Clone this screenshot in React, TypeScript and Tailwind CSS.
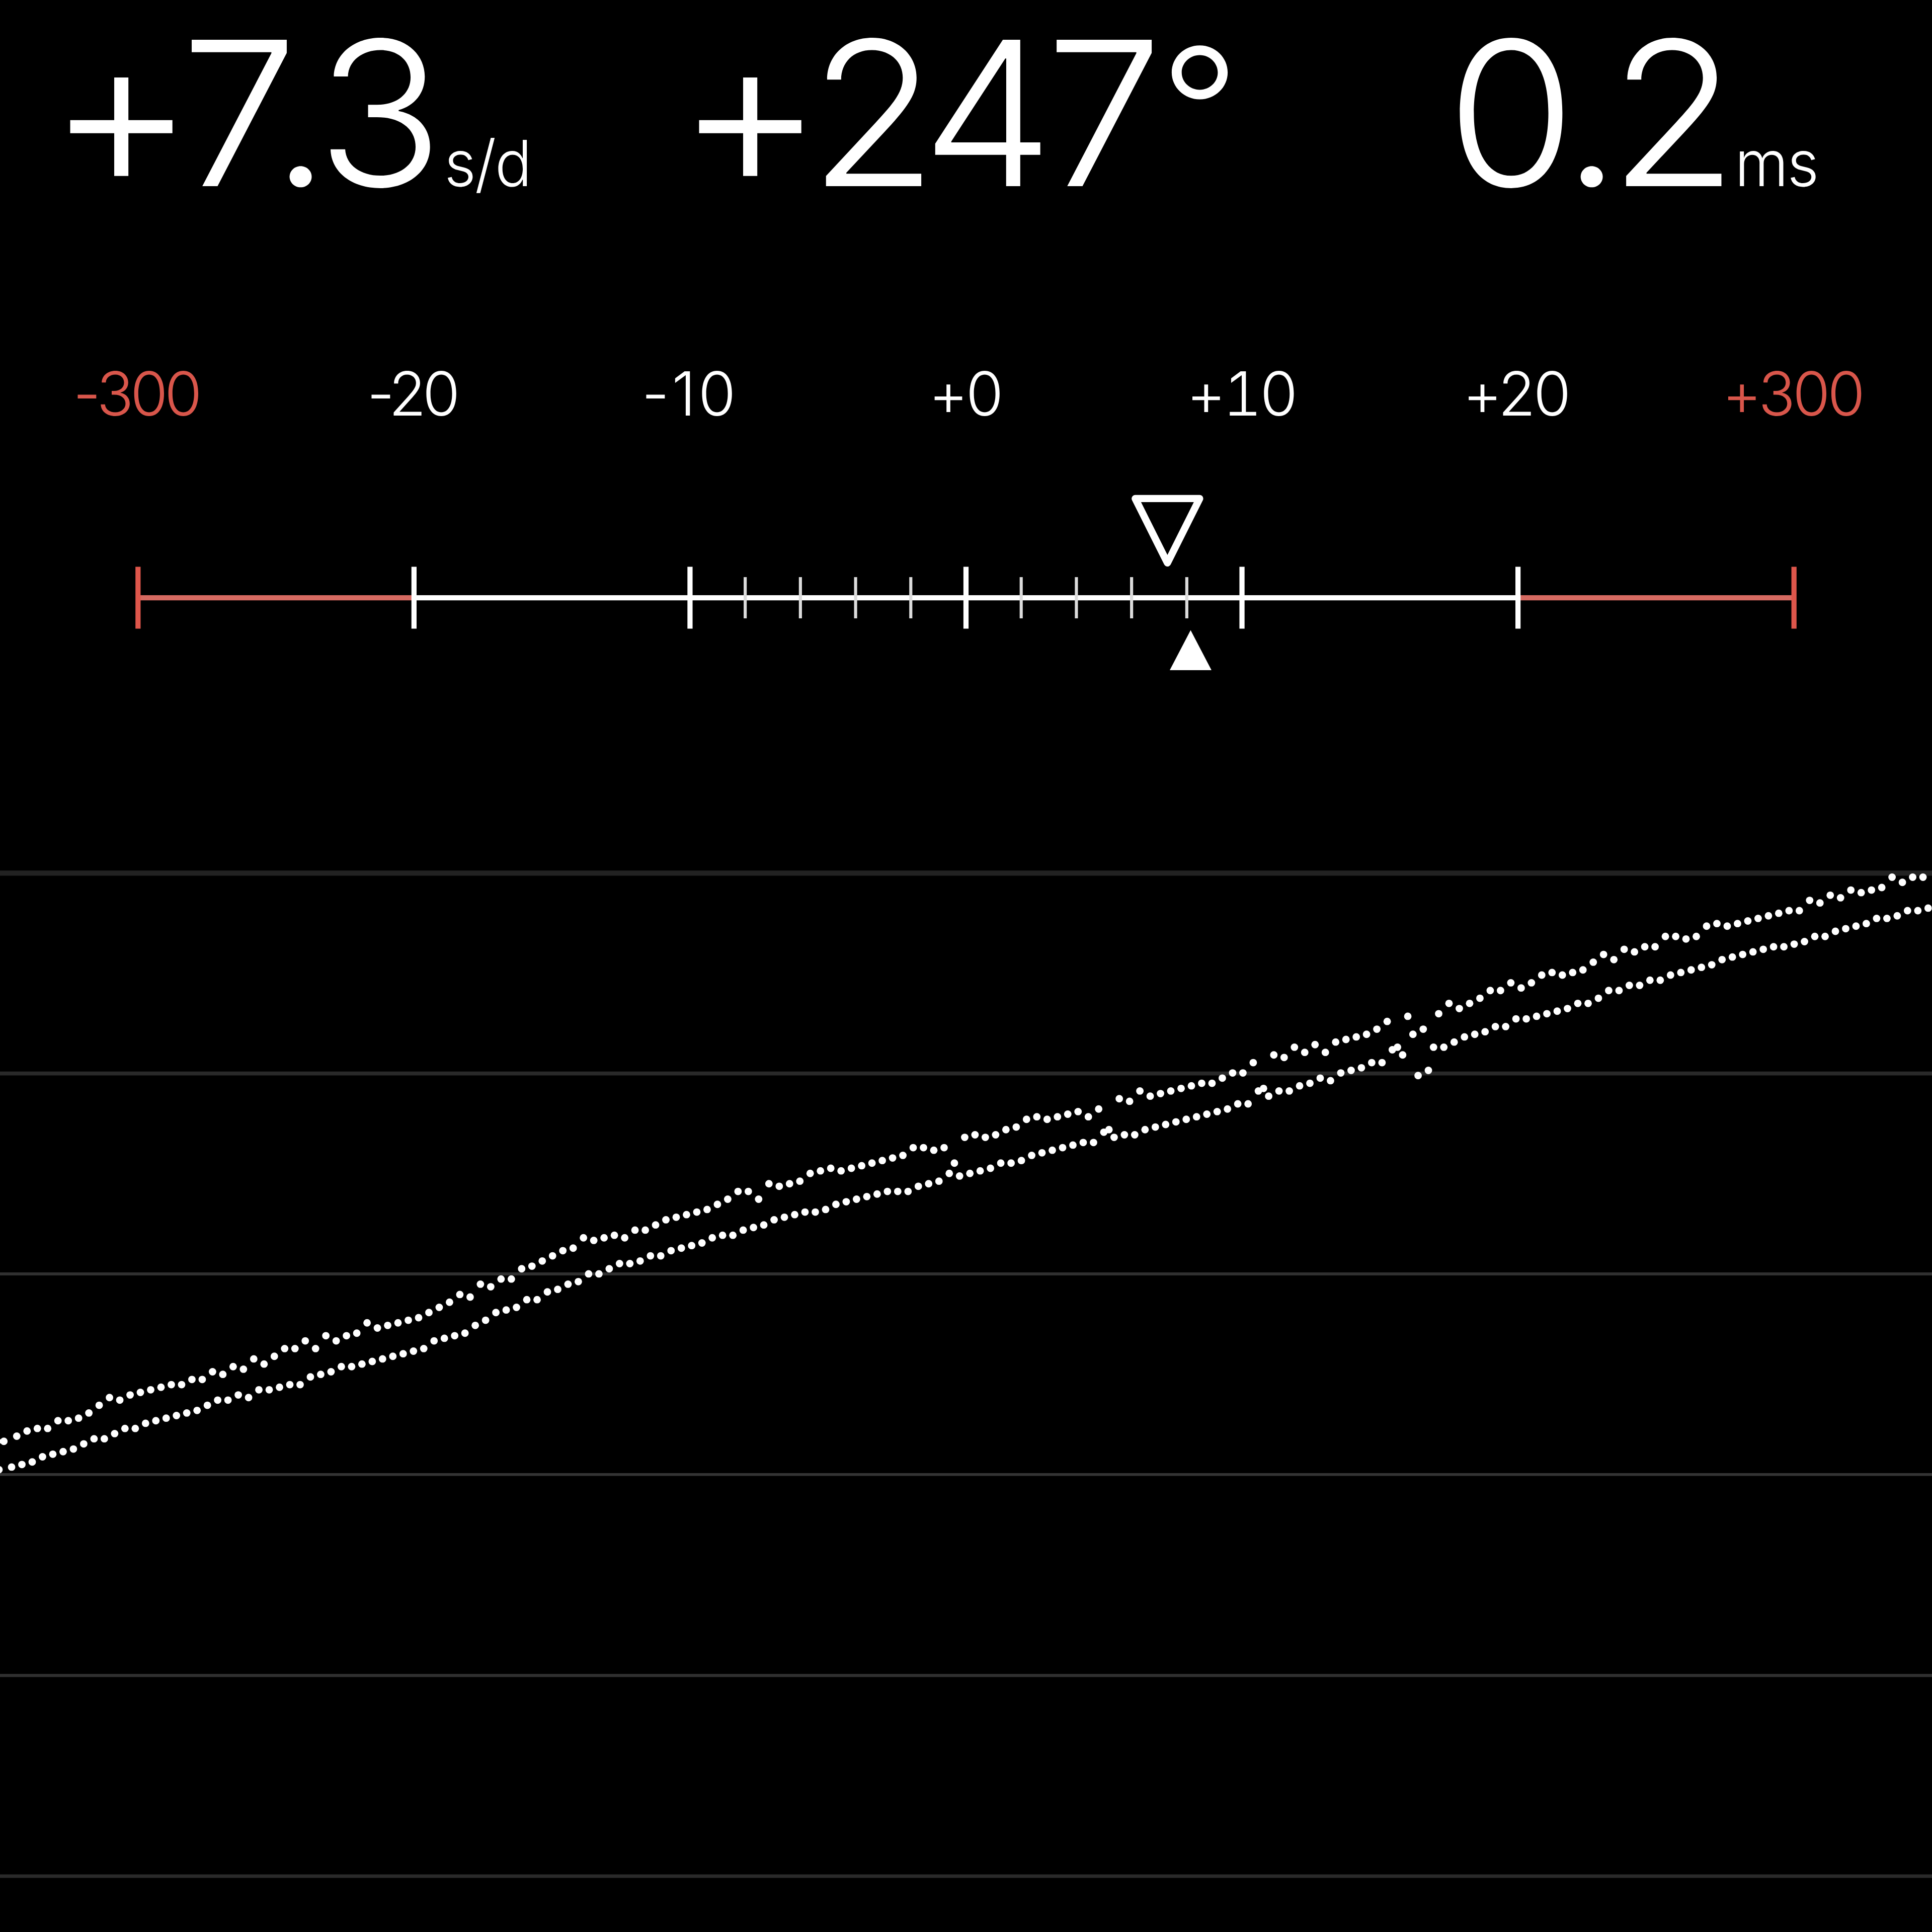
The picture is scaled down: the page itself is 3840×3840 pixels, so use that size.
const readouts = [
  {
    box: 'w-[1280px] pl-[94px]',
    glyphs: [
      { char: '+', style: 'text-[433px] tracking-[-28px] align-[-5px]' },
      { char: '7', style: 'tracking-[-51px]' },
      { char: '.', style: 'tracking-[-26px]' },
      { char: '3', style: '' },
    ],
    unit: 's/d',
    unitStyle: 'ml-[32px]',
  },
  {
    box: 'w-[1595px] pl-[64px]',
    glyphs: [
      { char: '+', style: 'text-[433px] tracking-[-29px] align-[-5px]' },
      { char: '2', style: 'tracking-[-30px]' },
      { char: '4', style: 'tracking-[-15px]' },
      { char: '7', style: 'tracking-[-6px]' },
      { char: '°', style: 'text-[337px] font-[350] align-[32px]' },
    ],
    unit: '',
    unitStyle: '',
  },
  {
    box: 'w-[960px]',
    glyphs: [
      { char: '0', style: 'tracking-[-26px]' },
      { char: '.', style: 'tracking-[-23px]' },
      { char: '2', style: '' },
    ],
    unit: 'ms',
    unitStyle: 'ml-[17px]',
  },
]

const labels = [
  { text: '-300', style: 'pr-[8px] tracking-[-0.055em] text-[#d9564b]' },
  { text: '-20', style: 'pr-[9px] tracking-[-0.06em]' },
  { text: '-10', style: 'tracking-[0.04em]' },
  { text: '+0', style: 'pr-[5px] tracking-[-0.04em]' },
  { text: '+10', style: 'pr-[4px] tracking-[-0.05em] tabular-nums' },
  { text: '+20', style: 'pr-[9px] tracking-[-0.035em]' },
  { text: '+300', style: 'pr-[7px] tracking-[-0.045em] text-[#d9564b]' },
]

// Tick positions on the 750 unit wide scale, one label column is 750 / 7
const column = 750 / 7
const majorTicks = [0, 1, 2, 3, 4, 5, 6].map((i) => column * (i + 0.5))
const minorTicks = [-4, -3, -2, -1, 1, 2, 3, 4].map((i) => 375 + (column / 5) * i)

const gridLines = [
  { y: 339, width: 2, color: '#222222' },
  { y: 416.8, width: 1.5, color: '#292929' },
  { y: 494.6, width: 1.2, color: '#303030' },
  { y: 572.5, width: 1.1, color: '#343434' },
  { y: 650.5, width: 1.2, color: '#303030' },
  { y: 728.4, width: 1.4, color: '#2a2a2a' },
]

// Beat traces, one sample every 4 units
const tick = [
  557, 555, 554, 554, 551, 551, 550, 548, 545, 542, 543, 541, 540, 539, 538, 537, 537, 535, 535, 532,
  533, 530, 531, 527, 529, 526, 523, 523, 520, 523, 518, 520, 518, 517, 513, 515, 514, 513, 512, 511,
  509, 507, 505, 502, 503, 498, 499, 496, 496, 492, 491, 489, 487, 485, 484, 480, 481, 480, 479, 480,
  477, 477, 475, 473, 472, 471, 470, 469, 467, 465, 462, 462, 465, 459, 460, 459, 458, 455, 454, 453,
  454, 453, 452, 451, 450, 449, 448, 445, 445, 446, 445, 451, 441, 440, 441, 440, 438, 437, 434, 433,
  434, 433, 432, 431, 433, 430, 438, 426, 427, 423, 425, 424, 423, 422, 421, 420, 420, 418, 416, 416,
  412, 422, 409, 410, 406, 408, 405, 408, 404, 403, 402, 401, 399, 396, 406, 394, 417, 415, 393, 389,
  391, 389, 387, 384, 384, 381, 383, 381, 378, 377, 378, 377, 376, 373, 370, 372, 368, 369, 367, 367,
  363, 363, 364, 363, 359, 358, 359, 358, 357, 356, 355, 354, 353, 353, 349, 350, 347, 348, 345, 346,
  345, 344, 340, 342, 340, 340,
]

const tock = [
  569, 568, 567, 565, 564, 563, 562, 560, 558, 558, 556, 554, 554, 552, 551, 550, 549, 548, 547, 545,
  543, 543, 541, 542, 539, 539, 538, 537, 537, 534, 533, 532, 530, 530, 529, 528, 527, 526, 525, 524,
  523, 520, 519, 518, 517, 514, 512, 509, 508, 507, 504, 504, 501, 500, 498, 497, 494, 494, 492, 490,
  490, 489, 487, 487, 485, 484, 483, 482, 480, 479, 479, 477, 476, 475, 473, 472, 471, 470, 470, 469,
  467, 466, 465, 464, 463, 462, 462, 462, 460, 459, 458, 455, 456, 455, 454, 453, 451, 451, 450, 448,
  447, 446, 445, 444, 443, 443, 439, 441, 440, 440, 438, 437, 436, 435, 434, 433, 432, 431, 430, 428,
  428, 423, 425, 423, 423, 421, 420, 418, 419, 416, 415, 414, 412, 412, 407, 409, 401, 399, 406, 406,
  404, 402, 401, 400, 398, 398, 395, 395, 394, 393, 392, 391, 389, 389, 387, 384, 384, 382, 382, 380,
  380, 378, 377, 376, 375, 374, 372, 371, 370, 369, 368, 367, 367, 366, 365, 363, 363, 361, 360, 359,
  358, 356, 356, 355, 353, 353, 352,
]

function Readouts() {
  return (
    <header className="flex h-[640px] items-start font-light text-white">
      {readouts.map((item, index) => (
        <div key={index} className={`flex items-baseline whitespace-nowrap ${item.box}`}>
          <div className="h-[448px] origin-left scale-x-104 text-[400px] leading-[449px]">
            {item.glyphs.map((glyph) => (
              <span key={glyph.char} className={`leading-[0.9] ${glyph.style}`}>
                {glyph.char}
              </span>
            ))}
          </div>
          {item.unit && (
            <span className={`origin-left scale-x-97 text-[126px] tracking-[-0.02em] ${item.unitStyle}`}>{item.unit}</span>
          )}
        </div>
      ))}
    </header>
  )
}

function Scale() {
  return (
    <section>
      <div className="grid h-[332.8px] grid-cols-7 pt-[62px] text-center text-[121px] leading-[160px] font-light text-white">
        {labels.map((label) => (
          <span key={label.text} className={label.style}>
            {label.text}
          </span>
        ))}
      </div>
      <svg viewBox="0 190 750 80" className="block h-[409.6px] w-full">
        <path d={`M${column / 2} 232H${column * 1.5}M${column * 5.5} 232H${column * 6.5}`} stroke="#d66a61" strokeWidth="2" />
        <path d={`M${column * 1.5} 232H${column * 5.5}`} stroke="#fff" strokeWidth="2" />
        {minorTicks.map((x) => (
          <path key={x} d={`M${x} 224V240`} stroke="#dcdcdc" strokeWidth="1.2" />
        ))}
        {majorTicks.map((x, i) => (
          <path key={x} d={`M${x} 220V244`} stroke={i === 0 || i === 6 ? '#de564b' : '#fff'} strokeWidth="2" />
        ))}
        <path d="M440.7 193.5H465.7L453.2 218.5Z" fill="none" stroke="#fff" strokeWidth="2.8" strokeLinejoin="round" />
        <path d="M462.2 244.6L470.3 260.1H454.1Z" fill="#fff" />
      </svg>
    </section>
  )
}

function Trace() {
  return (
    <svg viewBox="0 270 750 480" className="block h-[2457.6px] w-full">
      {gridLines.map((line) => (
        <path key={line.y} d={`M0 ${line.y}H750`} stroke={line.color} strokeWidth={line.width} />
      ))}
      <g fill="#fff">
        <circle cx="-1" cy="559.6" r="1.4" />
        <circle cx="1.5" cy="559.6" r="1.45" />
        <circle cx="-0.4" cy="570.6" r="1.45" />
        {tick.map((y, i) => (
          <circle key={i} cx={6.5 + i * 4} cy={y + 0.6} r="1.45" />
        ))}
        {tock.map((y, i) => (
          <circle key={i} cx={4.5 + i * 4} cy={y + 0.6} r="1.45" />
        ))}
      </g>
    </svg>
  )
}

export default function App() {
  return (
    <main className="h-[3840px] w-[3840px] overflow-hidden bg-black font-['Inter','Liberation_Sans',sans-serif] [font-feature-settings:'calt'_0]">
      <Readouts />
      <Scale />
      <Trace />
    </main>
  )
}
